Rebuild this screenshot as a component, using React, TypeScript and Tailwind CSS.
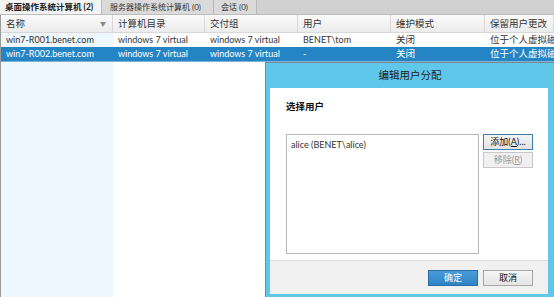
const FONT = { fontFamily: 'Lato, "Noto Sans CJK SC", sans-serif' };

const COLS = [
  { label: '名称', w: 'w-[112px]' },
  { label: '计算机目录', w: 'w-[92px]' },
  { label: '交付组', w: 'w-[93px]' },
  { label: '用户', w: 'w-[93px]' },
  { label: '维护模式', w: 'w-[94px]' },
  { label: '保留用户更改', w: 'flex-1' },
];

const ROWS = [
  ['win7-R001.benet.com', 'windows 7 virtual', 'windows 7 virtual', 'BENET\\tom', '关闭', '位于个人虚拟磁盘'],
  ['win7-R002.benet.com', 'windows 7 virtual', 'windows 7 virtual', '-', '关闭', '位于个人虚拟磁盘'],
];

const isCjk = (s: string) => /[\u4e00-\u9fff]/.test(s);

function Tabs() {
  return (
    <div className="flex h-[15px] bg-[#d1d1d1] border-b border-[#bdbdbd] text-[8px] leading-[14px] text-[#333] whitespace-nowrap">
      <div className="w-[102px] pl-[5px] bg-[#f3f3f3] text-[8.5px] font-bold text-[#222] border-r border-[#b8b8b8]">桌面操作系统计算机 (2)</div>
      <div className="w-[112px] pl-[8px] bg-[#dadada] border-r border-[#b8b8b8]">服务器操作系统计算机 (0)</div>
      <div className="w-[43px] pl-[7px] bg-[#dadada] border-r border-[#b8b8b8]">会话 (0)</div>
    </div>
  );
}

function Table() {
  return (
    <div className="flex flex-col flex-1 border-l border-[#9a9a9a]">
      <div className="flex h-[18px] bg-gradient-to-b from-[#fafafa] to-[#ececec] border-b border-[#d8d8d8] text-[9.5px] leading-[17px] text-[#333] whitespace-nowrap">
        {COLS.map((c, i) => (
          <div key={c.label} className={`${c.w} pl-[5px] border-r border-[#d9d9d9] flex items-center justify-between pr-[6px] overflow-hidden`}>
            <span>{c.label}</span>
            {i === 0 && <span className="text-[6px] text-[#888]">▼</span>}
          </div>
        ))}
      </div>
      {ROWS.map((r, ri) => (
        <div
          key={r[0]}
          className={`flex h-[14px] leading-[13px] ${ri === 1 ? 'bg-[#2585c4] text-white' : 'text-[#333]'}`}
        >
          {r.map((cell, ci) => (
            <div
              key={ci}
              className={`${COLS[ci].w} pl-[5px] whitespace-nowrap overflow-hidden ${isCjk(cell) ? 'text-[9.5px]' : 'text-[9px]'} ${ri === 0 && ci === 0 ? 'bg-[#eef6fe]' : ''}`}
            >
              {cell}
            </div>
          ))}
        </div>
      ))}
      <div className="flex flex-1 border-t border-[#7fb3d6]">
        <div className="w-[112px] bg-[#eef6fe]" />
        <div className="flex-1 bg-white" />
      </div>
    </div>
  );
}

function Dialog() {
  return (
    <div className="absolute left-[265px] top-[62px] w-[295px] h-[236px] bg-[#5fc7ea] border-l border-t border-[#7a8a92] flex flex-col pl-[4px] pb-[4px]">
      <div className="h-[25px] flex items-center justify-center text-[10.5px] text-[#222] pr-[10px]">编辑用户分配</div>
      <div className="flex-1 flex flex-col w-[278px] bg-white">
        <div className="pl-[16px] pt-[11px] text-[9.5px] font-bold text-[#111] leading-[16px]">选择用户</div>
        <div className="flex pl-[16px] pt-[19px] gap-[4px]">
          <div className="w-[193px] h-[120px] border border-[#b8b8b8] px-[4px] pt-[4px] text-[9px] leading-[12px] text-[#333]">
            alice (BENET\alice)
          </div>
          <div className="flex flex-col gap-[2px]">
            <div className="w-[50px] h-[16px] border border-[#3c7fb1] bg-gradient-to-b from-[#f4f4f4] to-[#e2e2e2] text-[9px] leading-[14px] text-center text-[#111] whitespace-nowrap">
              添加(<span className="underline">A</span>)...
            </div>
            <div className="w-[50px] h-[16px] border border-[#c8c8c8] bg-[#f0f0f0] text-[9px] leading-[14px] text-center text-[#9a9a9a] whitespace-nowrap">
              移除(<span className="underline">R</span>)
            </div>
          </div>
        </div>
        <div className="mt-auto h-[34px] border-t border-[#dcdcdc] bg-[#f0f0f0] flex justify-end items-start pt-[9px] pr-[15px] gap-[5px]">
          <div className="w-[50px] h-[16px] border border-[#2a6ea5] bg-gradient-to-b from-[#4a9cd8] to-[#2f84c5] text-[9px] leading-[14px] text-center text-white">
            确定
          </div>
          <div className="w-[50px] h-[16px] border border-[#a8a8a8] bg-gradient-to-b from-[#f6f6f6] to-[#e4e4e4] text-[9px] leading-[14px] text-center text-[#111]">
            取消
          </div>
        </div>
      </div>
    </div>
  );
}

export default function App() {
  return (
    <div className="relative w-[554px] h-[297px] overflow-hidden bg-white flex flex-col" style={FONT}>
      <Tabs />
      <Table />
      <Dialog />
    </div>
  );
}
